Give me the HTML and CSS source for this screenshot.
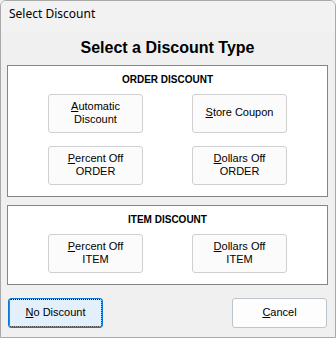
FILE: index.html
```html
<!DOCTYPE html>
<html>
<head>
<meta charset="utf-8">
<link rel="stylesheet" href="styles.css">
</head>
<body>
<div class="window">
  <div class="titlebar">Select Discount</div>
  <div class="content">
    <h1 class="heading">Select a Discount Type</h1>
    <div class="group group-order">
      <div class="group-label">ORDER DISCOUNT</div>
      <div class="btn-grid">
        <button class="btn"><u>A</u>utomatic<br>Discount</button>
        <button class="btn"><u>S</u>tore Coupon</button>
        <button class="btn"><u>P</u>ercent Off<br>ORDER</button>
        <button class="btn"><u>D</u>ollars Off<br>ORDER</button>
      </div>
    </div>
    <div class="group group-item">
      <div class="group-label">ITEM DISCOUNT</div>
      <div class="btn-grid">
        <button class="btn"><u>P</u>ercent Off<br>ITEM</button>
        <button class="btn"><u>D</u>ollars Off<br>ITEM</button>
      </div>
    </div>
    <div class="actions">
      <button class="btn action focused"><u>N</u>o Discount</button>
      <button class="btn action cancel"><u>C</u>ancel</button>
    </div>
  </div>
</div>
</body>
</html>
```

FILE: styles.css
```css
html, body {
  margin: 0;
  padding: 0;
  background: #f0f0f0;
}

.window {
  width: 336px;
  height: 338px;
  box-sizing: border-box;
  border: 1px solid #a9a9a9;
  border-radius: 6px 6px 0 0;
  background: #f0f0f0;
  font-family: "Liberation Sans", Arial, sans-serif;
  color: #000;
  overflow: hidden;
}

.titlebar {
  height: 30px;
  box-sizing: border-box;
  padding: 5px 0 0 8px;
  font-family: "Noto Sans", "Open Sans", sans-serif;
  font-size: 12px;
  line-height: 16px;
  color: #000;
  background: #f2f2f2;
}

.content {
  padding: 8px 7px 0 6px;
}

.heading {
  margin: 0;
  font-size: 16px;
  line-height: 18px;
  font-weight: bold;
  text-align: center;
}

.group {
  margin-top: 8px;
  width: 321px;
  box-sizing: border-box;
  border: 1px solid #858585;
  background: #fff;
  padding: 8px 0 11px 0;
}

.group-order {
  height: 132px;
}

.group-item {
  margin-top: 8px;
  height: 80px;
}

.group-label {
  font-size: 10px;
  line-height: 12px;
  font-weight: bold;
  text-align: center;
}

.btn-grid {
  margin-top: 8px;
  display: grid;
  grid-template-columns: 95px 95px;
  grid-auto-rows: 39px;
  column-gap: 49px;
  row-gap: 13px;
  padding-left: 40px;
}

.btn {
  box-sizing: border-box;
  margin: 0;
  padding: 0 0 2px 0;
  border: 1px solid #d0d0d0;
  border-radius: 3px;
  background: #fbfbfb;
  font-family: "Liberation Sans", Arial, sans-serif;
  font-size: 11px;
  line-height: 13px;
  color: #000;
  text-align: center;
}

.btn u {
  text-decoration: underline;
  text-underline-offset: 1px;
}

.actions {
  margin-top: 13px;
  display: flex;
  justify-content: space-between;
  padding: 0 1px;
}

.action {
  width: 95px;
  height: 30px;
}

.focused {
  background: #e3effa;
  border-color: #0a78d4;
  outline: 1px dotted #000;
  outline-offset: -2px;
}

.cancel {
  background: #fdfdfd;
  border-color: #bcc5ce;
}
```
